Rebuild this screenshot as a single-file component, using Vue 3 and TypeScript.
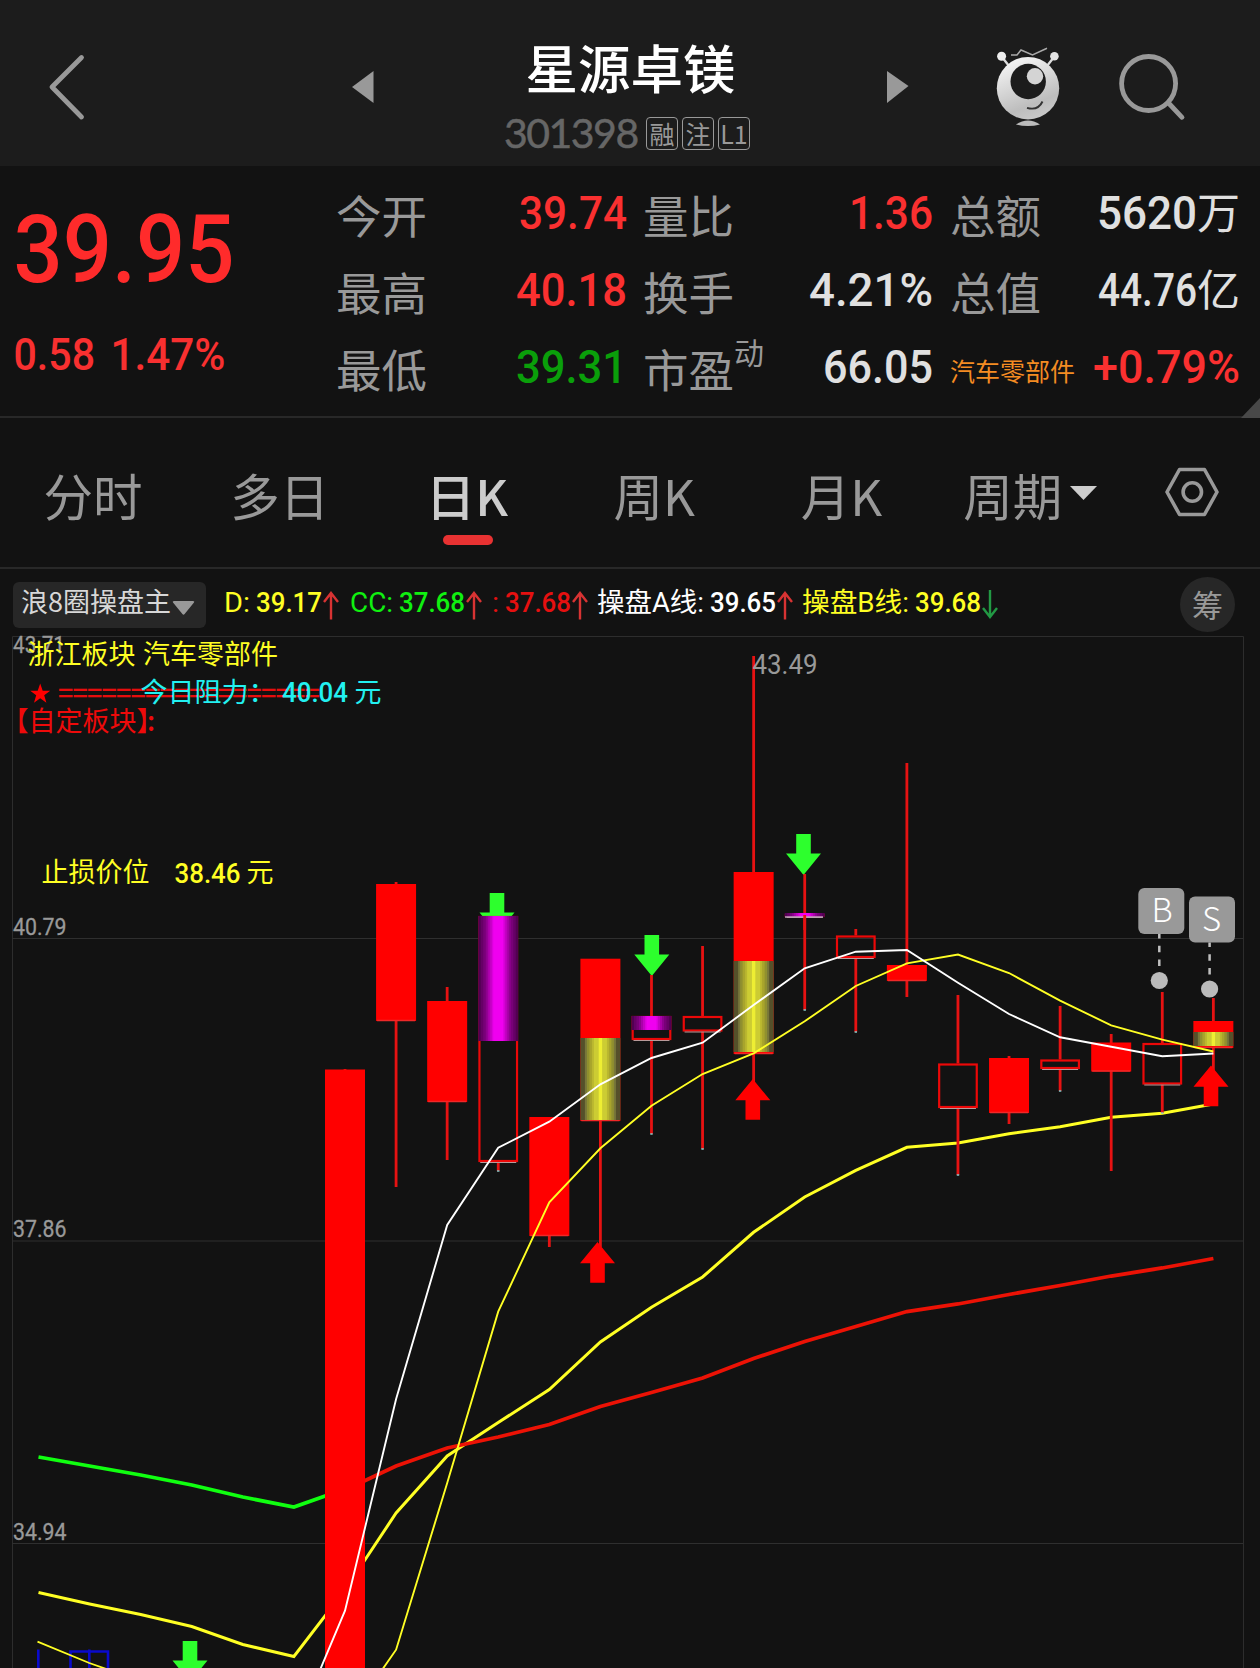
<script setup lang="ts">
interface Cell { text: string; unit?: string; tone: 'up' | 'down' | 'flat'; width: number }
interface Row { label: string; sup?: string; small?: boolean; cell: Cell }

const columns: Row[][] = [
  [
    { label: '今开', cell: { text: '39.74', tone: 'up', width: 108 } },
    { label: '最高', cell: { text: '40.18', tone: 'up', width: 111 } },
    { label: '最低', cell: { text: '39.31', tone: 'down', width: 111 } },
  ],
  [
    { label: '量比', cell: { text: '1.36', tone: 'up', width: 84 } },
    { label: '换手', cell: { text: '4.21%', tone: 'flat', width: 124 } },
    { label: '市盈', sup: '动', cell: { text: '66.05', tone: 'flat', width: 110 } },
  ],
  [
    { label: '总额', cell: { text: '5620', unit: '万', tone: 'flat', width: 100 } },
    { label: '总值', cell: { text: '44.76', unit: '亿', tone: 'flat', width: 99 } },
    { label: '汽车零部件', small: true, cell: { text: '+0.79%', tone: 'up', width: 147 } },
  ],
]

const tabs = ['分时', '多日', '日K', '周K', '月K']

interface Indicator { name: string; value: string; color: string; up: boolean; nameWidth: number; width: number }
const indicators: Indicator[] = [
  { name: 'D:', value: '39.17', color: '#ffff24', up: true, nameWidth: 32, width: 126 },
  { name: 'CC:', value: '37.68', color: '#10f010', up: true, nameWidth: 49, width: 142 },
  { name: ':', value: '37.68', color: '#e61010', up: true, nameWidth: 13, width: 105 },
  { name: '操盘A线:', value: '39.65', color: '#ffffff', up: true, nameWidth: 113, width: 204.5 },
  { name: '操盘B线:', value: '39.68', color: '#ffff24', up: false, nameWidth: 113, width: 201.5 },
]

type Kind = 'solid' | 'hollow'
interface Candle { kind: Kind; top: number; bottom: number; high: number; low: number; magenta?: [number, number]; gold?: [number, number] }
const STEP = 51.08
const cx = (i: number): number => 345 + i * STEP
const candles: Candle[] = [
  { kind: 'solid', top: 1069.5, bottom: 1690, high: 1069, low: 1690 },
  { kind: 'solid', top: 884, bottom: 1021, high: 882, low: 1187 },
  { kind: 'solid', top: 1001, bottom: 1102, high: 987, low: 1160 },
  { kind: 'hollow', top: 916, bottom: 1162, high: 916, low: 1171, magenta: [916, 1041] },
  { kind: 'solid', top: 1117, bottom: 1236, high: 1117, low: 1247 },
  { kind: 'solid', top: 958.7, bottom: 1121, high: 959, low: 1247, gold: [1038, 1120] },
  { kind: 'hollow', top: 1016, bottom: 1040, high: 975, low: 1134, magenta: [1016, 1030] },
  { kind: 'hollow', top: 1016, bottom: 1031.5, high: 946, low: 1149 },
  { kind: 'solid', top: 872, bottom: 1054, high: 656, low: 1082, gold: [961, 1052] },
  { kind: 'hollow', top: 914, bottom: 917, high: 874, low: 1010, magenta: [913, 917] },
  { kind: 'hollow', top: 935.5, bottom: 958, high: 929, low: 1032 },
  { kind: 'solid', top: 965, bottom: 981, high: 763, low: 997 },
  { kind: 'hollow', top: 1063.5, bottom: 1108, high: 995, low: 1175 },
  { kind: 'solid', top: 1058, bottom: 1113, high: 1056, low: 1124 },
  { kind: 'hollow', top: 1059.5, bottom: 1069, high: 1006, low: 1091 },
  { kind: 'solid', top: 1042.5, bottom: 1071.5, high: 1034, low: 1171 },
  { kind: 'hollow', top: 1043, bottom: 1084.5, high: 992, low: 1113 },
  { kind: 'solid', top: 1021, bottom: 1048, high: 998, low: 1085, gold: [1032, 1046] },
]

const goldBands: [number, string][] = [
  [20, '#55502a'], [15.5, '#77763a'], [13.5, '#90902f'], [11, '#a8a42c'], [8.5, '#bab72f'], [6.5, '#cccc33'], [1.7, '#eeee33'],
]
const magentaBands: [number, string][] = [
  [20, '#520052'], [17.5, '#660066'], [15, '#780078'], [12.5, '#8e008e'], [10.5, '#aa00aa'], [8.5, '#c400c4'], [6.5, '#dc00dc'], [5, '#f000f0'],
]

const series = (ys: number[], start = 0): string => ys.map((y, i) => `${cx(i + start).toFixed(1)},${y}`).join(' ')

const lineA = '320,1670 ' + series([1610.7, 1399, 1225, 1147.7, 1121.7, 1084.3, 1058, 1042.7, 1005, 968.3, 951.7, 950, 982.7, 1014, 1037.3, 1046.7, 1056.3, 1053.5])
const lineB = '382,1670 ' + series([1649.7, 1483, 1311.7, 1202.3, 1148.3, 1105.7, 1074, 1053.3, 1021.3, 986, 963.3, 954.5, 973, 1000.7, 1025.3, 1039.7, 1051.5], 1)
const lineD = series([1592.5, 1604, 1614.5, 1626.5, 1644.5, 1656.5, 1590, 1513, 1456, 1422.5, 1389.5, 1342, 1307.3, 1277, 1232.3, 1197, 1170.3, 1147.3, 1143, 1133.7, 1126.7, 1117.3, 1113.3, 1104], -6)
const lineC = series([1457, 1466, 1475, 1485, 1497, 1507, 1489], -6)
const lineR = series([1490, 1466, 1448, 1437, 1424.5, 1406.5, 1392.5, 1378, 1358.5, 1341.5, 1326.5, 1311.5, 1304, 1294.5, 1285.5, 1276, 1268, 1258.5])

const grid: [number, string, number][] = [[938.5, '40.79', 934.5], [1241, '37.86', 1237], [1543.5, '34.94', 1539.5]]

const down = (x: number, y: number): string => `M${x - 7.3} ${y}h14.6v19.5h10.2L${x} ${y + 41}L${x - 17.5} ${y + 19.5}h10.2z`
const rise = (x: number, y: number): string => `M${x} ${y}l17.5 21.3h-10.2v19.5h-14.6v-19.5h-10.2z`

const marks = [
  { t: 'B', x: 1138.3, y: 888, tx: 1162, dot: 1159.3 },
  { t: 'S', x: 1189, y: 896.5, tx: 1211.5, dot: 1209.6 },
]
</script>

<template>
  <main class="app">
    <header class="top">
      <svg class="back" width="40" height="70" viewBox="0 0 40 70"><path d="M34.500 5.500L5 35L34.500 65" fill="none" stroke="#999" stroke-width="4.800" stroke-linecap="round" stroke-linejoin="round" /></svg>
      <svg class="prev" width="22" height="34" viewBox="0 0 22 34"><path d="M21.500 1v32L0 17z" fill="#999" /></svg>
      <div class="title">
        <h1>星源卓镁</h1>
        <div class="sub"><span class="code">301398</span><i>融</i><i>注</i><i>L1</i></div>
      </div>
      <svg class="next" width="22" height="34" viewBox="0 0 22 34"><path d="M0 1v32L21.500 16z" fill="#999" /></svg>
      <svg class="robot" width="68" height="82" viewBox="994 46 68 82">
        <defs><linearGradient id="shell" x1=".3" y1="0" x2=".7" y2="1"><stop offset="0" stop-color="#f6f6f6" /><stop offset=".75" stop-color="#bdbdbd" /><stop offset="1" stop-color="#cacaca" /></linearGradient></defs>
        <path d="M1002 57l7 9M1054 57l-7 9" stroke="#ddd" stroke-width="2.300" />
        <circle cx="1001.600" cy="56.300" r="4.500" fill="#eee" /><circle cx="1054.400" cy="56.300" r="4.300" fill="#e4e4e4" />
        <path d="M1011 55h6l4-5 11.500 5L1047 48.300" fill="none" stroke="#aaa" stroke-width="1.500" />
        <circle cx="1028" cy="88.200" r="31.200" fill="url(#shell)" />
        <circle cx="1028.200" cy="81.500" r="17.700" fill="#1c1c1c" />
        <circle cx="1035" cy="76.300" r="8.200" fill="#d4d4d4" />
        <path d="M1027 107.800Q1038 111 1042.500 101.500" fill="none" stroke="#333" stroke-width="1.900" />
        <path d="M1016 124.500Q1028 116.500 1040 124.500Q1028 127.500 1016 124.500z" fill="#bbb" />
      </svg>
      <svg class="search" width="70" height="70" viewBox="1117 52 70 70"><circle cx="1148.600" cy="83.500" r="27" fill="none" stroke="#999" stroke-width="4.800" /><path d="M1169 103.500L1182 117.300" stroke="#999" stroke-width="4.800" stroke-linecap="round" /></svg>
    </header>

    <section class="quote">
      <div class="price">
        <svg width="240" height="80" viewBox="0 0 240 80"><text x="13.500" y="77.500" textLength="221" lengthAdjust="spacingAndGlyphs">39.95</text></svg>
        <svg class="delta" width="240" height="44" viewBox="0 0 240 44"><text x="13.500" y="36" textLength="81.500" lengthAdjust="spacingAndGlyphs">0.58</text><text x="110.500" y="36" textLength="115" lengthAdjust="spacingAndGlyphs">1.47%</text></svg>
      </div>
      <div v-for="(col, i) in columns" :key="i" class="col">
        <div v-for="row in col" :key="row.label" class="row">
          <span class="label" :class="{ small: row.small }">{{ row.label }}<sup v-if="row.sup">{{ row.sup }}</sup></span>
          <span class="value" :class="row.cell.tone">
            <svg :width="row.cell.width" height="46" :viewBox="`0 0 ${row.cell.width} 46`"><text x="0" y="42" :textLength="row.cell.width" lengthAdjust="spacingAndGlyphs">{{ row.cell.text }}</text></svg><b v-if="row.cell.unit">{{ row.cell.unit }}</b>
          </span>
        </div>
      </div>
      <span class="corner"></span>
    </section>

    <nav class="tabs">
      <span v-for="tab in tabs" :key="tab" class="tab" :class="{ active: tab === '日K' }">{{ tab }}</span>
      <span class="tab period">周期<svg width="28" height="14" viewBox="0 0 28 14"><path d="M0 0h27L13.500 14z" fill="#ccc" /></svg></span>
      <svg class="gear" width="58" height="54" viewBox="0 0 58 54"><path d="M16.500 4.500h25L54 27L41.500 49.500h-25L4 27z" fill="none" stroke="#999" stroke-width="3.600" stroke-linejoin="round" /><circle cx="29.300" cy="27" r="9.200" fill="none" stroke="#999" stroke-width="3.600" /></svg>
    </nav>

    <div class="legend">
      <span class="chip">浪8圈操盘主<svg width="23" height="14" viewBox="0 0 23 14"><path d="M2 0h19q2 0 .8 1.800L12.600 13q-1.100 1.400-2.200 0L1.200 1.800Q0 0 2 0z" fill="#999" /></svg></span>
      <svg v-for="(ind, i) in indicators" :key="i" :width="ind.width" height="40" :viewBox="`0 0 ${ind.width} 40`">
        <text x="0" y="29.500" :fill="ind.color" :textLength="ind.nameWidth - 6" lengthAdjust="spacingAndGlyphs" class="iname">{{ ind.name }}</text>
        <text :x="ind.nameWidth" y="29.500" :fill="ind.color" textLength="66" lengthAdjust="spacingAndGlyphs" class="ival">{{ ind.value }}</text>
        <path v-if="ind.up" :d="`M${ind.nameWidth + 75} 37.500V11M${ind.nameWidth + 68} 20L${ind.nameWidth + 75} 11l7 9`" fill="none" stroke="#d83333" stroke-width="2.400" />
        <path v-else :d="`M${ind.nameWidth + 75} 8v27M${ind.nameWidth + 68} 26L${ind.nameWidth + 75} 35l7-9`" fill="none" stroke="#229944" stroke-width="2.400" />
      </svg>
      <span class="chou">筹</span>
    </div>

    <svg class="chart" width="1260" height="1032" viewBox="0 636 1260 1032">
      <path d="M12.500 1668V636.500H1243.500V1668" fill="none" stroke="#2d2d2d" />
      <g v-for="g in grid" :key="g[1]">
        <path :d="`M12 ${g[0]}H1243`" stroke="#2f2f2f" stroke-width="1.200" />
        <text x="13" :y="g[2]" class="axis" textLength="53.500" lengthAdjust="spacingAndGlyphs">{{ g[1] }}</text>
      </g>
      <text x="13" y="653" class="axis" textLength="52" lengthAdjust="spacingAndGlyphs">43.71</text>

      <g fill="none" stroke="#0a0acc" stroke-width="2.600"><path d="M38.300 1649.500V1668M70.500 1668V1651.500H108V1668M89.300 1649.500V1668" /></g>
      <polyline :points="lineD" fill="none" stroke="#ffff24" stroke-width="3" />
      <polyline :points="lineC" fill="none" stroke="#10ff10" stroke-width="3.800" />
      <polyline :points="lineR" fill="none" stroke="#ec1205" stroke-width="3.800" />

      <g fill="#2dff2d">
        <path :d="down(190, 1641)" /><path :d="down(497, 893)" /><path :d="down(651.8, 935)" /><path :d="down(803.500, 834)" />
      </g>

      <g v-for="(c, i) in candles" :key="i">
        <path :d="`M${cx(i)} ${c.high}V${c.kind === 'hollow' ? c.top : c.bottom}M${cx(i)} ${c.bottom}V${c.low}`" stroke="#e61212" stroke-width="2.800" />
        <template v-if="c.kind === 'hollow'">
          <rect :x="cx(i) - 18.800" :y="c.top + 1" width="37.600" :height="c.bottom - c.top - 2" fill="none" stroke="#ec0808" stroke-width="2.200" />
          <path :d="`M${cx(i) - 18} ${c.bottom + .5}h36`" stroke="#b99a9a" stroke-width="1" />
          <path :d="`M${cx(i) - 1.200} ${c.low}h2.400`" stroke="#8cc" stroke-width="1.500" />
        </template>
        <template v-else>
          <rect :x="cx(i) - 20" :y="c.top" width="40" :height="c.bottom - c.top" fill="#ff0000" />
          <path :d="`M${cx(i) - 19} ${c.bottom - .5}h38`" stroke="#f02828" stroke-width="1.500" />
        </template>
        <template v-if="c.gold">
          <rect v-for="b in goldBands" :key="b[0]" :x="cx(i) - b[0]" :y="c.gold[0]" :width="b[0] * 2" :height="c.gold[1] - c.gold[0]" :fill="b[1]" />
        </template>
        <template v-if="c.magenta">
          <rect v-for="b in magentaBands" :key="b[0]" :x="cx(i) - b[0]" :y="c.magenta[0]" :width="b[0] * 2" :height="c.magenta[1] - c.magenta[0]" :fill="b[1]" />
        </template>
      </g>
      <path d="M785 917h38" stroke="#c0a0b8" stroke-width="1.300" /><path d="M804.700 915V930" stroke="#e61212" stroke-width="2.800" />

      <g fill="#ff0000">
        <path :d="rise(597.500, 1242)" /><path :d="rise(752.800, 1079)" /><path :d="rise(1211, 1065.500)" />
      </g>
      <polyline points="37.500,1641.700 89.300,1663 112,1671" fill="none" stroke="#ffff24" stroke-width="1.800" />
      <polyline :points="lineB" fill="none" stroke="#ffff24" stroke-width="1.900" />
      <polyline :points="lineA" fill="none" stroke="#ffffff" stroke-width="1.900" />

      <text x="752.500" y="674" class="peak" textLength="65" lengthAdjust="spacingAndGlyphs">43.49</text>

      <g class="note" fill="#ffff24">
        <text x="27.500" y="664">浙江板块</text><text x="143" y="664">汽车零部件</text>
        <text x="41.500" y="882">止损价位</text><text x="174.500" y="882.500" class="num" textLength="66" lengthAdjust="spacingAndGlyphs">38.46</text><text x="246.500" y="882">元</text>
      </g>
      <g class="note" fill="#ff0000">
        <path d="M40.200 683.500l2.500 7.200h7.500l-6 4.600 2.200 7.400-6.200-4.400-6.200 4.400 2.200-7.400-6-4.600h7.500z" />
        <text x="58" y="702.500" class="rule" textLength="262" lengthAdjust="spacing" fill="#e60d0d">==================</text>
        <text x="1.500" y="731" fill="#ee0a0a">【自定板块】</text><text x="147" y="731" class="colon" fill="#ee0a0a">:</text>
      </g>
      <g class="note" fill="#22f0f0">
        <text x="140.500" y="701.500">今日阻力：</text><text x="282" y="701.500" class="num" textLength="66" lengthAdjust="spacingAndGlyphs">40.04</text><text x="354.500" y="701.500">元</text>
      </g>

      <g v-for="m in marks" :key="m.t">
        <rect :x="m.x" :y="m.y" width="46" height="46" rx="6" fill="#999" />
        <text :x="m.tx" :y="m.y + 34" class="mark">{{ m.t }}</text>
        <path :d="`M${m.dot} ${m.y + 46}v36`" stroke="#c0c0c0" stroke-width="2.500" stroke-dasharray="6.500 7.300" stroke-dashoffset="2" />
        <circle :cx="m.dot" :cy="m.y + 92.500" r="8.600" fill="#bbb" />
      </g>
    </svg>
  </main>
</template>

<style>
body { background: #121212; overflow: hidden; }
</style>

<style scoped>
.app { width: 1260px; height: 1668px; overflow: hidden; background: #121212; color: #999; font-family: "Noto Sans CJK SC", sans-serif; }
svg { display: block; flex: none; overflow: visible; }
.top { height: 166px; display: flex; align-items: flex-start; background: #1c1c1c; }
.back { margin: 52px 0 0 47px; }
.prev { margin: 70px 0 0 265px; }
.title { width: 513px; text-align: center; }
.title h1 { margin: 28px 0 0; font-size: 52.500px; line-height: 76px; font-weight: 500; color: #fff; }
.sub { display: flex; margin: 10px 0 0 130px; align-items: center; height: 38px; }
.code { width: 142px; text-align: left; font: 400 41px/38px Lato, sans-serif; color: #666; letter-spacing: -1.500px; -webkit-text-stroke: .5px #666; }
.sub i { box-sizing: border-box; width: 32px; height: 33px; margin-right: 4px; border: 1px solid #999; border-radius: 4px; font-style: normal; font-size: 25px; line-height: 31px; display: flex; justify-content: center; }
.next { margin: 70px 0 0 0; }
.robot { margin: 46px 0 0 85px; }
.search { margin: 52px 0 0 55px; }

.quote { box-sizing: border-box; position: relative; height: 252px; display: flex; border-bottom: 2px solid #282828; }
.price { width: 336px; padding-top: 38px; }
.price text { font: 500 95px Roboto, sans-serif; fill: #ff2b2b; }
.price .delta { margin-top: 50px; }
.price .delta text { font-size: 43.500px; fill: #f83030; }
.col { width: 291px; margin-right: 16px; padding-top: 10px; }
.col + .col { width: 290px; margin-right: 17px; }
.col:nth-child(4) { width: 290px; margin: 0; }
.row { display: flex; justify-content: space-between; height: 77px; align-items: center; }
.label { position: relative; font-size: 45.500px; line-height: 77px; white-space: nowrap; }
.label sup { position: absolute; left: 91px; top: -17px; font-size: 30px; line-height: 77px; }
.label.small { font-size: 25px; color: #f48c22; padding-top: 3px; }
.value { display: flex; align-items: center; height: 60px; margin-top: -10px; }
.value text { font: 500 46px Roboto, sans-serif; }
.value b { font-size: 43px; font-weight: 400; line-height: 60px; }
.up { color: #fa3030; fill: #fa3030; }
.down { color: #0a9f0a; fill: #0a9f0a; }
.flat { color: #e0e0e0; fill: #e0e0e0; }
.corner { position: absolute; right: 0; bottom: -2px; border-left: 19px solid transparent; border-bottom: 20px solid #484848; }

.tabs { box-sizing: border-box; height: 151px; display: flex; border-bottom: 2px solid #282828; }
.tab { position: relative; width: 187.300px; text-align: center; font-size: 49.500px; line-height: 154px; white-space: nowrap; }
.tab:first-child { width: 186px; }
.tab.active { color: #ccc; font-weight: 500; }
.tab.active::after { content: ""; position: absolute; left: 70px; top: 117px; width: 50px; height: 10px; border-radius: 5px; background: #e83232; }
.period { display: flex; width: 200px; padding-left: 28px; }
.period svg { margin: 68px 0 0 8px; }
.gear { margin: 47px 0 0 0; }

.legend { height: 67px; display: flex; align-items: flex-start; }
.chip { box-sizing: border-box; display: flex; width: 193px; height: 46px; margin: 13px 18px 0 13px; padding-left: 8px; border-radius: 6px; background: #272727; color: #d8d8d8; font-size: 27px; line-height: 38px; white-space: nowrap; }
.chip svg { margin: 19px 0 0 1px; }
.legend > svg { margin-top: 13px; }
.iname { font: 400 27px Roboto, "Noto Sans CJK SC", sans-serif; }
.ival { font: 500 28px Roboto, sans-serif; }
.chou { width: 55px; height: 55px; margin: 8px 0 0 177px; border-radius: 50%; background: #272727; text-align: center; font-size: 31px; line-height: 54px; }

.axis { font: 400 23.500px Roboto, sans-serif; fill: #999; stroke: #999; stroke-width: .3px; }
.peak { font: 400 27px Roboto, sans-serif; fill: #999; }
.note { font: 400 27px "Noto Sans CJK SC", sans-serif; }
.note .num { font: 500 27.500px Roboto, sans-serif; }
.rule { font: 500 27px "Noto Sans CJK SC", sans-serif; }
.colon { font-weight: 500; }
.mark { font: 300 33px "Noto Sans CJK SC", sans-serif; fill: #fff; text-anchor: middle; }
</style>
